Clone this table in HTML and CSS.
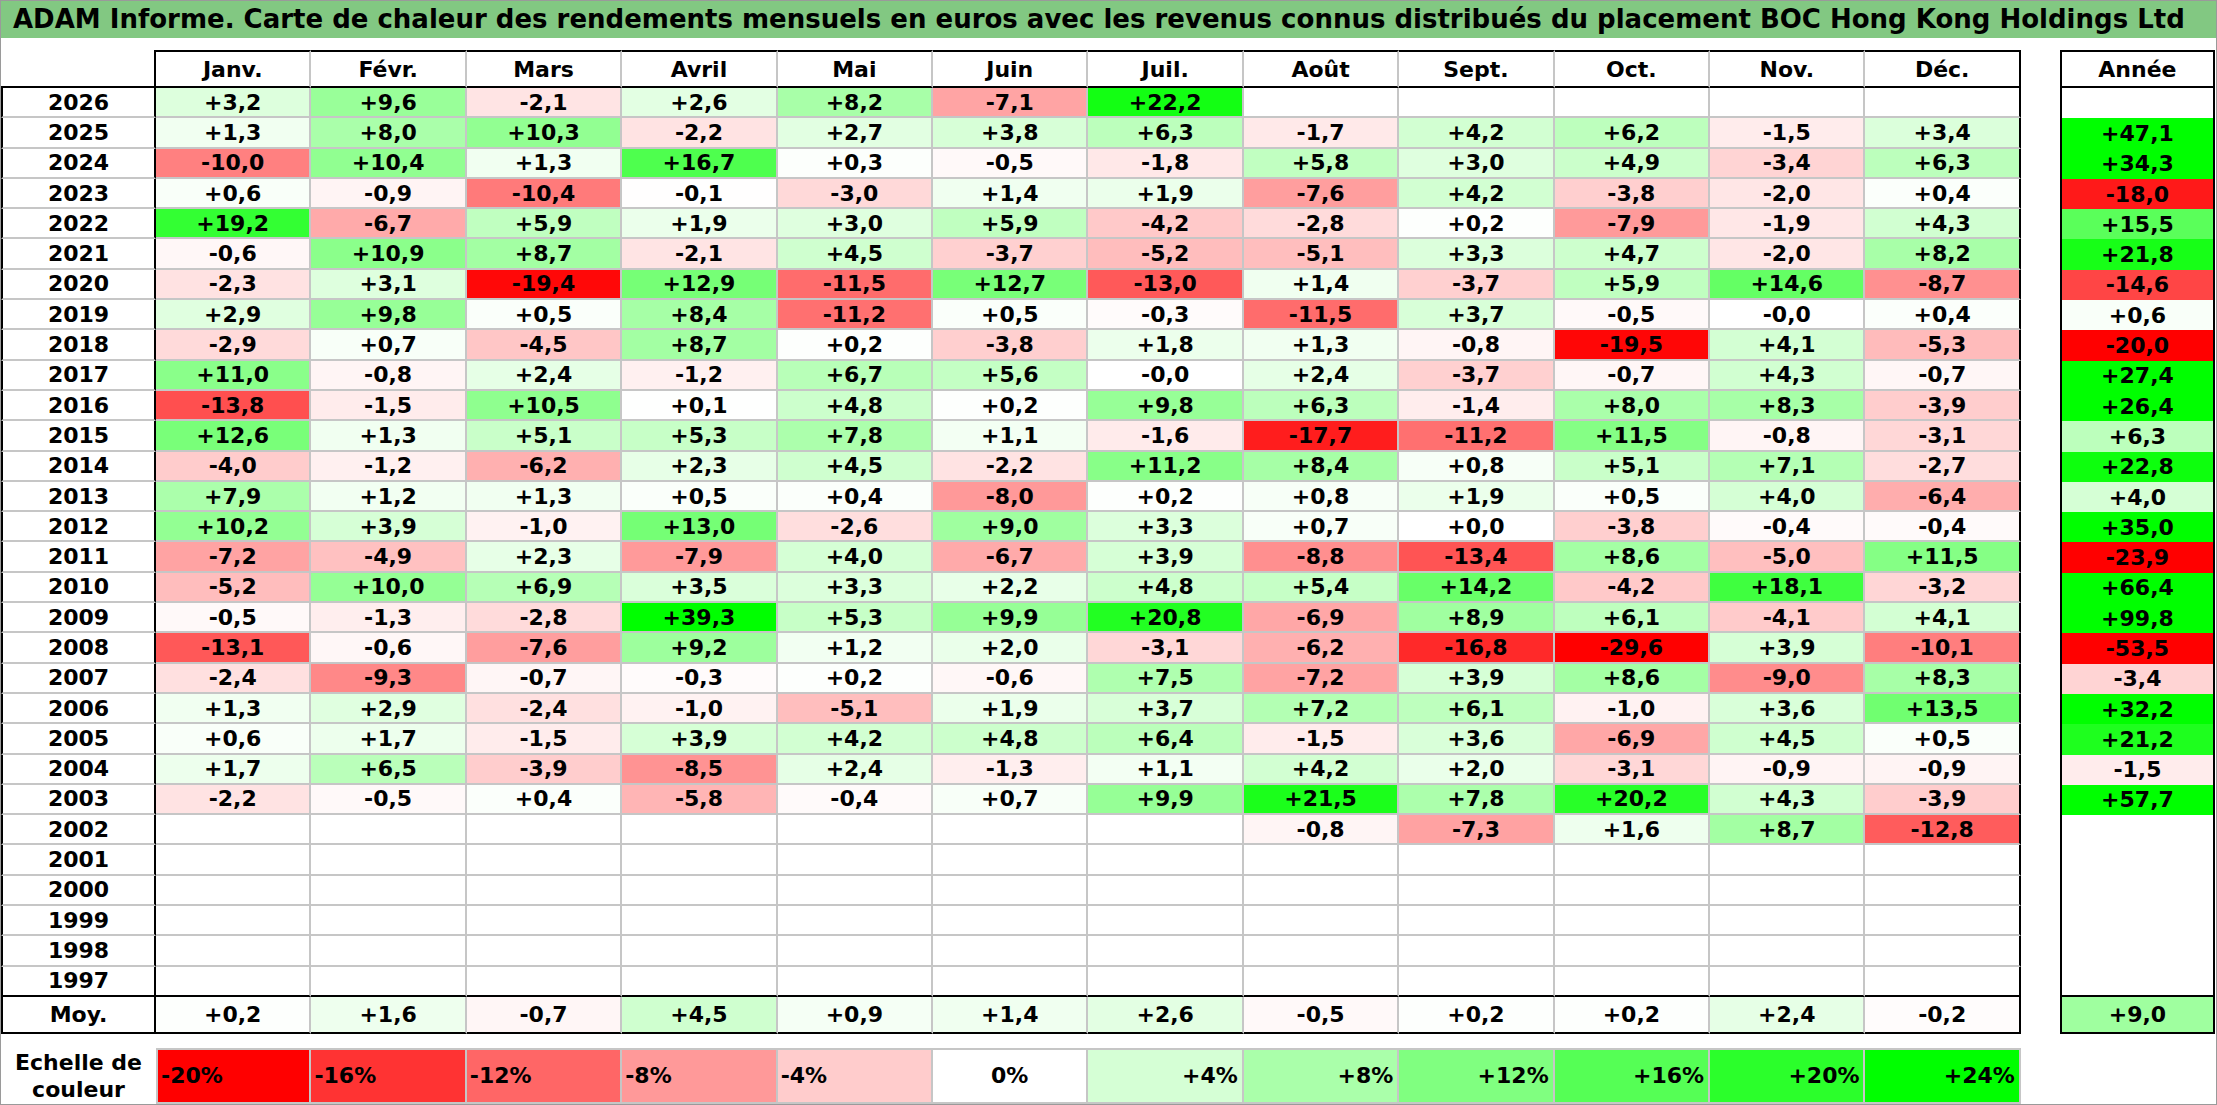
FILE: index.html
```html
<!DOCTYPE html>
<html lang="fr">
<head>
<meta charset="utf-8">
<title>ADAM Informe</title>
<link rel="stylesheet" href="styles.css">
</head>
<body>
<div class="frame">
  <div class="title">ADAM Informe. Carte de chaleur des rendements mensuels en euros avec les revenus connus distribués du placement BOC Hong Kong Holdings Ltd</div>
  <div class="content">
    <table class="grid">
      <colgroup>
        <col class="c-year">
        <col class="c-m"><col class="c-m"><col class="c-m"><col class="c-m"><col class="c-m"><col class="c-m">
        <col class="c-m"><col class="c-m"><col class="c-m"><col class="c-m"><col class="c-m"><col class="c-m">
        <col class="c-gap">
        <col class="c-year">
      </colgroup>
      <thead>
        <tr class="hrow">
          <th class="yh"></th>
          <th class="mh first">Janv.</th><th class="mh">Févr.</th><th class="mh">Mars</th><th class="mh">Avril</th><th class="mh">Mai</th><th class="mh">Juin</th>
          <th class="mh">Juil.</th><th class="mh">Août</th><th class="mh">Sept.</th><th class="mh">Oct.</th><th class="mh">Nov.</th><th class="mh last">Déc.</th>
          <th class="gap"></th>
          <th class="ah">Année</th>
        </tr>
      </thead>
      <tbody id="rows">
        <tr><td class="y">2026</td><td class="v">+3,2</td><td class="v">+9,6</td><td class="v">-2,1</td><td class="v">+2,6</td><td class="v">+8,2</td><td class="v">-7,1</td><td class="v">+22,2</td><td class="v"></td><td class="v"></td><td class="v"></td><td class="v"></td><td class="v"></td><td class="gap"></td><td class="a"></td></tr>
        <tr><td class="y">2025</td><td class="v">+1,3</td><td class="v">+8,0</td><td class="v">+10,3</td><td class="v">-2,2</td><td class="v">+2,7</td><td class="v">+3,8</td><td class="v">+6,3</td><td class="v">-1,7</td><td class="v">+4,2</td><td class="v">+6,2</td><td class="v">-1,5</td><td class="v">+3,4</td><td class="gap"></td><td class="a">+47,1</td></tr>
        <tr><td class="y">2024</td><td class="v">-10,0</td><td class="v">+10,4</td><td class="v">+1,3</td><td class="v">+16,7</td><td class="v">+0,3</td><td class="v">-0,5</td><td class="v">-1,8</td><td class="v">+5,8</td><td class="v">+3,0</td><td class="v">+4,9</td><td class="v">-3,4</td><td class="v">+6,3</td><td class="gap"></td><td class="a">+34,3</td></tr>
        <tr><td class="y">2023</td><td class="v">+0,6</td><td class="v">-0,9</td><td class="v">-10,4</td><td class="v">-0,1</td><td class="v">-3,0</td><td class="v">+1,4</td><td class="v">+1,9</td><td class="v">-7,6</td><td class="v">+4,2</td><td class="v">-3,8</td><td class="v">-2,0</td><td class="v">+0,4</td><td class="gap"></td><td class="a">-18,0</td></tr>
        <tr><td class="y">2022</td><td class="v">+19,2</td><td class="v">-6,7</td><td class="v">+5,9</td><td class="v">+1,9</td><td class="v">+3,0</td><td class="v">+5,9</td><td class="v">-4,2</td><td class="v">-2,8</td><td class="v">+0,2</td><td class="v">-7,9</td><td class="v">-1,9</td><td class="v">+4,3</td><td class="gap"></td><td class="a">+15,5</td></tr>
        <tr><td class="y">2021</td><td class="v">-0,6</td><td class="v">+10,9</td><td class="v">+8,7</td><td class="v">-2,1</td><td class="v">+4,5</td><td class="v">-3,7</td><td class="v">-5,2</td><td class="v">-5,1</td><td class="v">+3,3</td><td class="v">+4,7</td><td class="v">-2,0</td><td class="v">+8,2</td><td class="gap"></td><td class="a">+21,8</td></tr>
        <tr><td class="y">2020</td><td class="v">-2,3</td><td class="v">+3,1</td><td class="v">-19,4</td><td class="v">+12,9</td><td class="v">-11,5</td><td class="v">+12,7</td><td class="v">-13,0</td><td class="v">+1,4</td><td class="v">-3,7</td><td class="v">+5,9</td><td class="v">+14,6</td><td class="v">-8,7</td><td class="gap"></td><td class="a">-14,6</td></tr>
        <tr><td class="y">2019</td><td class="v">+2,9</td><td class="v">+9,8</td><td class="v">+0,5</td><td class="v">+8,4</td><td class="v">-11,2</td><td class="v">+0,5</td><td class="v">-0,3</td><td class="v">-11,5</td><td class="v">+3,7</td><td class="v">-0,5</td><td class="v">-0,0</td><td class="v">+0,4</td><td class="gap"></td><td class="a">+0,6</td></tr>
        <tr><td class="y">2018</td><td class="v">-2,9</td><td class="v">+0,7</td><td class="v">-4,5</td><td class="v">+8,7</td><td class="v">+0,2</td><td class="v">-3,8</td><td class="v">+1,8</td><td class="v">+1,3</td><td class="v">-0,8</td><td class="v">-19,5</td><td class="v">+4,1</td><td class="v">-5,3</td><td class="gap"></td><td class="a">-20,0</td></tr>
        <tr><td class="y">2017</td><td class="v">+11,0</td><td class="v">-0,8</td><td class="v">+2,4</td><td class="v">-1,2</td><td class="v">+6,7</td><td class="v">+5,6</td><td class="v">-0,0</td><td class="v">+2,4</td><td class="v">-3,7</td><td class="v">-0,7</td><td class="v">+4,3</td><td class="v">-0,7</td><td class="gap"></td><td class="a">+27,4</td></tr>
        <tr><td class="y">2016</td><td class="v">-13,8</td><td class="v">-1,5</td><td class="v">+10,5</td><td class="v">+0,1</td><td class="v">+4,8</td><td class="v">+0,2</td><td class="v">+9,8</td><td class="v">+6,3</td><td class="v">-1,4</td><td class="v">+8,0</td><td class="v">+8,3</td><td class="v">-3,9</td><td class="gap"></td><td class="a">+26,4</td></tr>
        <tr><td class="y">2015</td><td class="v">+12,6</td><td class="v">+1,3</td><td class="v">+5,1</td><td class="v">+5,3</td><td class="v">+7,8</td><td class="v">+1,1</td><td class="v">-1,6</td><td class="v">-17,7</td><td class="v">-11,2</td><td class="v">+11,5</td><td class="v">-0,8</td><td class="v">-3,1</td><td class="gap"></td><td class="a">+6,3</td></tr>
        <tr><td class="y">2014</td><td class="v">-4,0</td><td class="v">-1,2</td><td class="v">-6,2</td><td class="v">+2,3</td><td class="v">+4,5</td><td class="v">-2,2</td><td class="v">+11,2</td><td class="v">+8,4</td><td class="v">+0,8</td><td class="v">+5,1</td><td class="v">+7,1</td><td class="v">-2,7</td><td class="gap"></td><td class="a">+22,8</td></tr>
        <tr><td class="y">2013</td><td class="v">+7,9</td><td class="v">+1,2</td><td class="v">+1,3</td><td class="v">+0,5</td><td class="v">+0,4</td><td class="v">-8,0</td><td class="v">+0,2</td><td class="v">+0,8</td><td class="v">+1,9</td><td class="v">+0,5</td><td class="v">+4,0</td><td class="v">-6,4</td><td class="gap"></td><td class="a">+4,0</td></tr>
        <tr><td class="y">2012</td><td class="v">+10,2</td><td class="v">+3,9</td><td class="v">-1,0</td><td class="v">+13,0</td><td class="v">-2,6</td><td class="v">+9,0</td><td class="v">+3,3</td><td class="v">+0,7</td><td class="v">+0,0</td><td class="v">-3,8</td><td class="v">-0,4</td><td class="v">-0,4</td><td class="gap"></td><td class="a">+35,0</td></tr>
        <tr><td class="y">2011</td><td class="v">-7,2</td><td class="v">-4,9</td><td class="v">+2,3</td><td class="v">-7,9</td><td class="v">+4,0</td><td class="v">-6,7</td><td class="v">+3,9</td><td class="v">-8,8</td><td class="v">-13,4</td><td class="v">+8,6</td><td class="v">-5,0</td><td class="v">+11,5</td><td class="gap"></td><td class="a">-23,9</td></tr>
        <tr><td class="y">2010</td><td class="v">-5,2</td><td class="v">+10,0</td><td class="v">+6,9</td><td class="v">+3,5</td><td class="v">+3,3</td><td class="v">+2,2</td><td class="v">+4,8</td><td class="v">+5,4</td><td class="v">+14,2</td><td class="v">-4,2</td><td class="v">+18,1</td><td class="v">-3,2</td><td class="gap"></td><td class="a">+66,4</td></tr>
        <tr><td class="y">2009</td><td class="v">-0,5</td><td class="v">-1,3</td><td class="v">-2,8</td><td class="v">+39,3</td><td class="v">+5,3</td><td class="v">+9,9</td><td class="v">+20,8</td><td class="v">-6,9</td><td class="v">+8,9</td><td class="v">+6,1</td><td class="v">-4,1</td><td class="v">+4,1</td><td class="gap"></td><td class="a">+99,8</td></tr>
        <tr><td class="y">2008</td><td class="v">-13,1</td><td class="v">-0,6</td><td class="v">-7,6</td><td class="v">+9,2</td><td class="v">+1,2</td><td class="v">+2,0</td><td class="v">-3,1</td><td class="v">-6,2</td><td class="v">-16,8</td><td class="v">-29,6</td><td class="v">+3,9</td><td class="v">-10,1</td><td class="gap"></td><td class="a">-53,5</td></tr>
        <tr><td class="y">2007</td><td class="v">-2,4</td><td class="v">-9,3</td><td class="v">-0,7</td><td class="v">-0,3</td><td class="v">+0,2</td><td class="v">-0,6</td><td class="v">+7,5</td><td class="v">-7,2</td><td class="v">+3,9</td><td class="v">+8,6</td><td class="v">-9,0</td><td class="v">+8,3</td><td class="gap"></td><td class="a">-3,4</td></tr>
        <tr><td class="y">2006</td><td class="v">+1,3</td><td class="v">+2,9</td><td class="v">-2,4</td><td class="v">-1,0</td><td class="v">-5,1</td><td class="v">+1,9</td><td class="v">+3,7</td><td class="v">+7,2</td><td class="v">+6,1</td><td class="v">-1,0</td><td class="v">+3,6</td><td class="v">+13,5</td><td class="gap"></td><td class="a">+32,2</td></tr>
        <tr><td class="y">2005</td><td class="v">+0,6</td><td class="v">+1,7</td><td class="v">-1,5</td><td class="v">+3,9</td><td class="v">+4,2</td><td class="v">+4,8</td><td class="v">+6,4</td><td class="v">-1,5</td><td class="v">+3,6</td><td class="v">-6,9</td><td class="v">+4,5</td><td class="v">+0,5</td><td class="gap"></td><td class="a">+21,2</td></tr>
        <tr><td class="y">2004</td><td class="v">+1,7</td><td class="v">+6,5</td><td class="v">-3,9</td><td class="v">-8,5</td><td class="v">+2,4</td><td class="v">-1,3</td><td class="v">+1,1</td><td class="v">+4,2</td><td class="v">+2,0</td><td class="v">-3,1</td><td class="v">-0,9</td><td class="v">-0,9</td><td class="gap"></td><td class="a">-1,5</td></tr>
        <tr><td class="y">2003</td><td class="v">-2,2</td><td class="v">-0,5</td><td class="v">+0,4</td><td class="v">-5,8</td><td class="v">-0,4</td><td class="v">+0,7</td><td class="v">+9,9</td><td class="v">+21,5</td><td class="v">+7,8</td><td class="v">+20,2</td><td class="v">+4,3</td><td class="v">-3,9</td><td class="gap"></td><td class="a">+57,7</td></tr>
        <tr><td class="y">2002</td><td class="v"></td><td class="v"></td><td class="v"></td><td class="v"></td><td class="v"></td><td class="v"></td><td class="v"></td><td class="v">-0,8</td><td class="v">-7,3</td><td class="v">+1,6</td><td class="v">+8,7</td><td class="v">-12,8</td><td class="gap"></td><td class="a"></td></tr>
        <tr><td class="y">2001</td><td class="v"></td><td class="v"></td><td class="v"></td><td class="v"></td><td class="v"></td><td class="v"></td><td class="v"></td><td class="v"></td><td class="v"></td><td class="v"></td><td class="v"></td><td class="v"></td><td class="gap"></td><td class="a"></td></tr>
        <tr><td class="y">2000</td><td class="v"></td><td class="v"></td><td class="v"></td><td class="v"></td><td class="v"></td><td class="v"></td><td class="v"></td><td class="v"></td><td class="v"></td><td class="v"></td><td class="v"></td><td class="v"></td><td class="gap"></td><td class="a"></td></tr>
        <tr><td class="y">1999</td><td class="v"></td><td class="v"></td><td class="v"></td><td class="v"></td><td class="v"></td><td class="v"></td><td class="v"></td><td class="v"></td><td class="v"></td><td class="v"></td><td class="v"></td><td class="v"></td><td class="gap"></td><td class="a"></td></tr>
        <tr><td class="y">1998</td><td class="v"></td><td class="v"></td><td class="v"></td><td class="v"></td><td class="v"></td><td class="v"></td><td class="v"></td><td class="v"></td><td class="v"></td><td class="v"></td><td class="v"></td><td class="v"></td><td class="gap"></td><td class="a"></td></tr>
        <tr class="lastrow"><td class="y">1997</td><td class="v"></td><td class="v"></td><td class="v"></td><td class="v"></td><td class="v"></td><td class="v"></td><td class="v"></td><td class="v"></td><td class="v"></td><td class="v"></td><td class="v"></td><td class="v"></td><td class="gap"></td><td class="a"></td></tr>
        <tr class="moy"><td class="y">Moy.</td><td class="v">+0,2</td><td class="v">+1,6</td><td class="v">-0,7</td><td class="v">+4,5</td><td class="v">+0,9</td><td class="v">+1,4</td><td class="v">+2,6</td><td class="v">-0,5</td><td class="v">+0,2</td><td class="v">+0,2</td><td class="v">+2,4</td><td class="v">-0,2</td><td class="gap"></td><td class="a">+9,0</td></tr>
        <tr class="spacer"><td colspan="15"></td></tr>
        <tr class="scale">
          <td class="slabel">Echelle de<br>couleur</td>
          <td class="s neg s-20">-20%</td><td class="s neg s-16">-16%</td><td class="s neg s-12">-12%</td><td class="s neg s-8">-8%</td><td class="s neg s-4">-4%</td>
          <td class="s zero s0">0%</td>
          <td class="s pos s4">+4%</td><td class="s pos s8">+8%</td><td class="s pos s12">+12%</td><td class="s pos s16">+16%</td><td class="s pos s20">+20%</td><td class="s pos s24">+24%</td>
          <td class="gap"></td><td class="gap"></td>
        </tr>
      </tbody>
    </table>
  </div>
</div>
<script src="script.js"></script>
</body>
</html>
```

FILE: styles.css
```css
html, body {
  margin: 0;
  padding: 0;
  background: #ffffff;
}
body {
  font-family: "DejaVu Sans", "Liberation Sans", sans-serif;
  font-weight: bold;
  color: #000;
}
.frame {
  width: 2217px;
  height: 1105px;
  box-sizing: border-box;
  border: 1px solid #9a9a9a;
  overflow: hidden;
}
.title {
  height: 37px;
  line-height: 37px;
  background: #82c882;
  padding-left: 12px;
  font-size: 26px;
  white-space: nowrap;
}
.content {
  padding-top: 12px;
}
.grid {
  border-collapse: separate;
  border-spacing: 0;
  table-layout: fixed;
  width: 2214px;
  font-size: 22px;
}
.c-year { width: 155px; }
.c-m { width: 155.4px; }
.c-gap { width: 39px; }
.grid th, .grid td {
  padding: 0;
  text-align: center;
  box-sizing: border-box;
  white-space: nowrap;
}
.hrow th { height: 38px; font-weight: bold; }
.yh {
  border-right: 2px solid #000;
  border-bottom: 2px solid #000;
}
.mh {
  border-top: 2px solid #000;
  border-bottom: 2px solid #000;
  border-right: 2px solid #c6c6c6;
}
.mh.last { border-right: 2px solid #000; }
.ah {
  border: 2px solid #000;
}
#rows tr td { height: 30.3px; }
td.y {
  border-left: 2px solid #000;
  border-right: 2px solid #000;
  border-bottom: 2px solid #c6c6c6;
}
td.v {
  border-right: 2px solid #c6c6c6;
  border-bottom: 2px solid #c6c6c6;
}
tr td.v:nth-child(13) { border-right: 2px solid #000; }
td.a {
  border-left: 2px solid #000;
  border-right: 2px solid #000;
}
tr.lastrow td.y, tr.lastrow td.v, tr.lastrow td.a {
  border-bottom: 2px solid #000;
}
#rows tr.moy td { height: 37px; }
tr.moy td.y, tr.moy td.v, tr.moy td.a {
  border-bottom: 2px solid #000;
}
#rows tr.spacer td { height: 14px; }
#rows tr.scale td { height: 56px; }
td.slabel {
  line-height: 27px;
  text-align: center;
  white-space: normal;
}
td.s {
  border-top: 2px solid #c6c6c6;
  border-right: 2px solid #c6c6c6;
  border-bottom: 2px solid #c6c6c6;
}
td.s-20 { border-left: 2px solid #c6c6c6; }
td.neg { text-align: left; padding-left: 3px; }
td.zero { text-align: center; }
td.pos { text-align: right; padding-right: 4px; }
.s-20 { background: #ff0000; }
.s-16 { background: #ff3333; }
.s-12 { background: #ff6666; }
.s-8 { background: #ff9999; }
.s-4 { background: #ffcccc; }
.s0 { background: #ffffff; }
.s4 { background: #d5ffd5; }
.s8 { background: #aaffaa; }
.s12 { background: #80ff80; }
.s16 { background: #55ff55; }
.s20 { background: #2bff2b; }
.s24 { background: #00ff00; }
```

FILE: script.js
```js
(function () {
  var cells = document.querySelectorAll('td.v, td.a');
  for (var i = 0; i < cells.length; i++) {
    var t = cells[i].textContent.trim();
    if (!t) continue;
    var v = parseFloat(t.replace(',', '.'));
    var c;
    if (v < 0) {
      var k = Math.round(255 * (1 + Math.max(v, -20) / 20));
      c = 'rgb(255,' + k + ',' + k + ')';
    } else {
      var g = Math.round(255 * (1 - Math.min(v, 24) / 24));
      c = 'rgb(' + g + ',255,' + g + ')';
    }
    cells[i].style.backgroundColor = c;
  }
})();
```
